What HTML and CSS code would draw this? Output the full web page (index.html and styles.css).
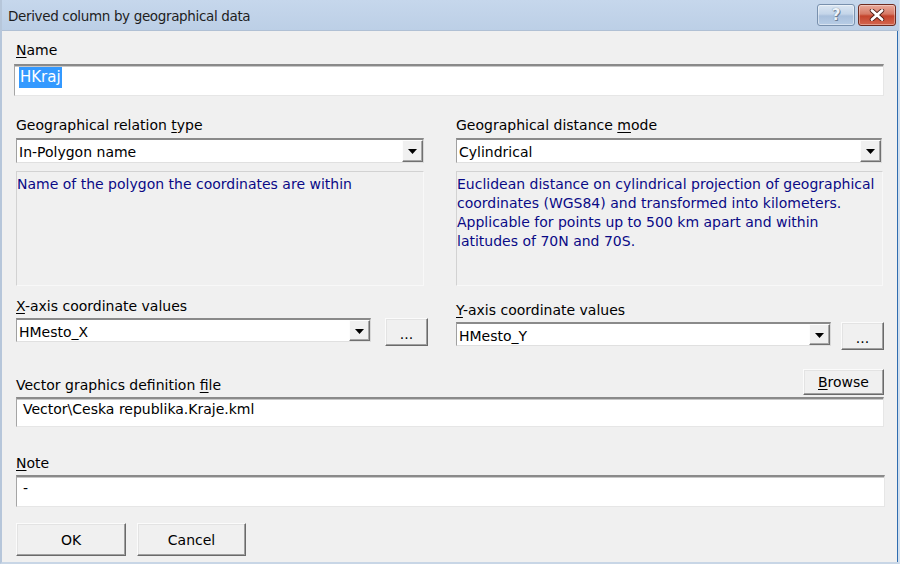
FILE: index.html
```html
<!DOCTYPE html>
<html lang="en">
<head>
<meta charset="utf-8">
<title>Derived column by geographical data</title>
<link rel="stylesheet" href="styles.css">
</head>
<body>
<div class="window">
  <div class="titlebar">
    <span class="title">Derived column by geographical data</span>
    <div class="caption-btns">
      <div class="cbtn help"><span>?</span></div>
      <div class="cbtn close">
        <svg width="16" height="12" viewBox="0 0 16 12"><path d="M3 1.5 L13 10.5 M13 1.5 L3 10.5" stroke="#4a1a12" stroke-width="4.4" stroke-linecap="round" fill="none"/><path d="M3 1.5 L13 10.5 M13 1.5 L3 10.5" stroke="#fff" stroke-width="2.8" stroke-linecap="round" fill="none"/></svg>
      </div>
    </div>
  </div>
  <div class="client">
    <div class="label first"><u>N</u>ame</div>
    <div class="textbox name-box"><span class="sel">HKraj</span></div>

    <div class="cols">
      <div class="col left">
        <div class="label">Geographical relation <u>t</u>ype</div>
        <div class="combo wide"><span class="val">In-Polygon name</span><div class="drop"><svg width="9" height="5" viewBox="0 0 9 5"><path d="M0 0 H9 L4.5 5 Z" fill="#000"/></svg></div></div>
        <div class="desc">Name of the polygon the coordinates are within</div>
        <div class="label axis"><u>X</u>-axis coordinate values</div>
        <div class="combo-row">
          <div class="combo"><span class="val">HMesto_X</span><div class="drop"><svg width="9" height="5" viewBox="0 0 9 5"><path d="M0 0 H9 L4.5 5 Z" fill="#000"/></svg></div></div>
          <div class="btn dots">...</div>
        </div>
      </div>
      <div class="col right">
        <div class="label">Geographical distance <u>m</u>ode</div>
        <div class="combo wide"><span class="val">Cylindrical</span><div class="drop"><svg width="9" height="5" viewBox="0 0 9 5"><path d="M0 0 H9 L4.5 5 Z" fill="#000"/></svg></div></div>
        <div class="desc">Euclidean distance on cylindrical projection of geographical<br>coordinates (WGS84) and transformed into kilometers.<br>Applicable for points up to 500 km apart and within<br>latitudes of 70N and 70S.</div>
        <div class="label axis"><u>Y</u>-axis coordinate values</div>
        <div class="combo-row">
          <div class="combo"><span class="val">HMesto_Y</span><div class="drop"><svg width="9" height="5" viewBox="0 0 9 5"><path d="M0 0 H9 L4.5 5 Z" fill="#000"/></svg></div></div>
          <div class="btn dots">...</div>
        </div>
      </div>
    </div>

    <div class="file-head">
      <div class="label">Vector graphics definition <u>f</u>ile</div>
      <div class="btn browse"><u>B</u>rowse</div>
    </div>
    <div class="textbox file-box">Vector\Ceska republika.Kraje.kml</div>

    <div class="label note-label"><u>N</u>ote</div>
    <div class="textbox note-box">-</div>

    <div class="actions">
      <div class="btn ok">OK</div>
      <div class="btn cancel">Cancel</div>
    </div>
  </div>
</div>
</body>
</html>
```

FILE: styles.css
```css
* { box-sizing: border-box; }
html, body { margin: 0; padding: 0; }
body {
  width: 900px;
  height: 564px;
  overflow: hidden;
  font-family: "DejaVu Sans", sans-serif;
  font-size: 14px;
  color: #000;
  background: #f0f0f0;
}
u { text-decoration: underline; text-underline-offset: 2px; }

.window {
  width: 900px;
  height: 564px;
  background: #f0f0f0;
  border-left: 2px solid #b6c6da;
  border-right: 2px solid #d3e0ee;
  border-bottom: 2px solid #c8d6e6;
  box-shadow: inset -1px 0 #2f6db0;
  display: flex;
  flex-direction: column;
}

.titlebar {
  height: 31px;
  flex: none;
  background: linear-gradient(#c6d7ec, #bccfe6);
  border-bottom: 1px solid #b0c0d4;
  display: flex;
  align-items: flex-start;
  justify-content: space-between;
  margin-right: -1px;
}
.title {
  margin: 8px 0 0 6px;
  color: #1e1e1e;
  font-size: 13.5px;
  letter-spacing: -0.35px;
}
.caption-btns {
  display: flex;
  gap: 3px;
  margin: 4px 3px 0 0;
}
.cbtn {
  height: 22px;
  border-radius: 3px;
  display: flex;
  align-items: center;
  justify-content: center;
}
.help {
  width: 38px;
  background: linear-gradient(#dbe6f2 0%, #c4d5e9 45%, #a9c0dc 55%, #b8cde6 100%);
  border: 1px solid #7890ad;
  box-shadow: inset 0 0 0 1px rgba(255,255,255,0.45);
}
.help span {
  font-family: "DejaVu Sans", sans-serif;
  font-weight: bold;
  font-size: 15px;
  color: #eef3f9;
  text-shadow: 0 0 1px #5c6e86, 1px 1px 0 #6d7f96;
  line-height: 1;
}
.close {
  width: 38px;
  background: linear-gradient(#e9a99b 0%, #d67a66 45%, #c4442d 55%, #d4664f 100%);
  border: 1px solid #6e2b20;
  box-shadow: inset 0 0 0 1px rgba(255,255,255,0.35);
}

.client {
  flex: 1;
  padding: 11px 14px 0 14px;
  display: flex;
  flex-direction: column;
}

.label {
  height: 16px;
  line-height: 16px;
  white-space: nowrap;
}

.textbox {
  background: #fff;
  border-top: 2px solid #8a8a8a;
  border-left: 1px solid #a5a5a5;
  border-right: 1px solid #e6e6e6;
  border-bottom: 1px solid #e6e6e6;
  box-shadow: inset 0 1px #c8c8c8;
}
.name-box {
  margin: 6px 0 0 -2px;
  width: 870px;
  height: 32px;
  padding: 1px 0 0 4px;
  font-size: 15px;
}
.sel {
  display: inline-block;
  background: #3399ff;
  color: #fff;
  height: 21px;
  line-height: 21px;
  padding: 0 1px;
}

.cols {
  display: flex;
  margin-top: 21px;
}
.col { display: flex; flex-direction: column; }
.col.left { width: 412px; }
.col.right { margin-left: 28px; width: 428px; }

.combo {
  margin-top: 5px;
  height: 25px;
  background: #fff;
  border-top: 2px solid #8a8a8a;
  border-left: 1px solid #a0a0a0;
  border-right: 1px solid #d8d8d8;
  border-bottom: 1px solid #e0e0e0;
  display: flex;
  align-items: stretch;
}
.combo .val {
  flex: 1;
  padding: 2px 0 0 2px;
  line-height: 20px;
  font-size: 14px;
  white-space: nowrap;
  overflow: hidden;
}
.left .combo.wide { width: 408px; }
.right .combo.wide { width: 426px; }
.drop {
  width: 21px;
  background: #f0f0f0;
  border-top: 1px solid #fdfdfd;
  border-left: 1px solid #fdfdfd;
  border-right: 1px solid #707070;
  border-bottom: 1px solid #707070;
  box-shadow: inset -1px -1px #a8a8a8;
  display: flex;
  align-items: center;
  justify-content: center;
  padding-top: 1px;
}

.desc {
  margin-top: 8px;
  height: 115px;
  background: #f0f0f0;
  border-top: 1px solid #d2d2d2;
  border-left: 1px solid #d2d2d2;
  border-right: 1px solid #f8f8f8;
  border-bottom: 1px solid #f8f8f8;
  color: #0a0a86;
  font-size: 14px;
  line-height: 19px;
  padding: 3px 0 0 0;
  white-space: nowrap;
}
.left .desc { width: 408px; }
.right .desc { width: 427px; }

.label.axis { margin-top: 12px; }
.right .label.axis { margin-top: 16px; }

.combo-row {
  display: flex;
  align-items: flex-start;
  gap: 14px;
}
.combo-row .combo { margin-top: 4px; height: 24px; }
.left .combo-row .combo { width: 355px; }
.right .combo-row .combo { width: 375px; }
.right .combo-row { gap: 10px; }

.btn {
  background: #f0f0f0;
  border-top: 1px solid #fbfbfb;
  border-left: 1px solid #fbfbfb;
  border-right: 1px solid #6a6a6a;
  border-bottom: 1px solid #6a6a6a;
  box-shadow: inset -1px -1px #a0a0a0, inset 1px 1px #e3e3e3;
  display: flex;
  align-items: center;
  justify-content: center;
  white-space: nowrap;
}
.dots {
  margin-top: 4px;
  width: 43px;
  height: 28px;
  padding-top: 3px;
}

.file-head {
  margin-top: 19px;
  display: flex;
  justify-content: space-between;
  align-items: flex-end;
  width: 868px;
}
.file-head .label { margin-bottom: 2px; }
.browse {
  width: 81px;
  height: 26px;
  font-size: 14px;
}
.file-box {
  margin-top: 2px;
  width: 868px;
  height: 30px;
  padding: 2px 0 0 6px;
  font-size: 14px;
}

.note-label { margin-top: 28px; }
.note-box {
  margin-top: 4px;
  width: 869px;
  height: 32px;
  padding: 3px 0 0 6px;
  font-size: 14px;
}

.actions {
  margin-top: 16px;
  display: flex;
  gap: 11px;
}
.ok, .cancel {
  height: 33px;
  font-size: 14px;
}
.ok { width: 110px; }
.cancel { width: 109px; }
```
